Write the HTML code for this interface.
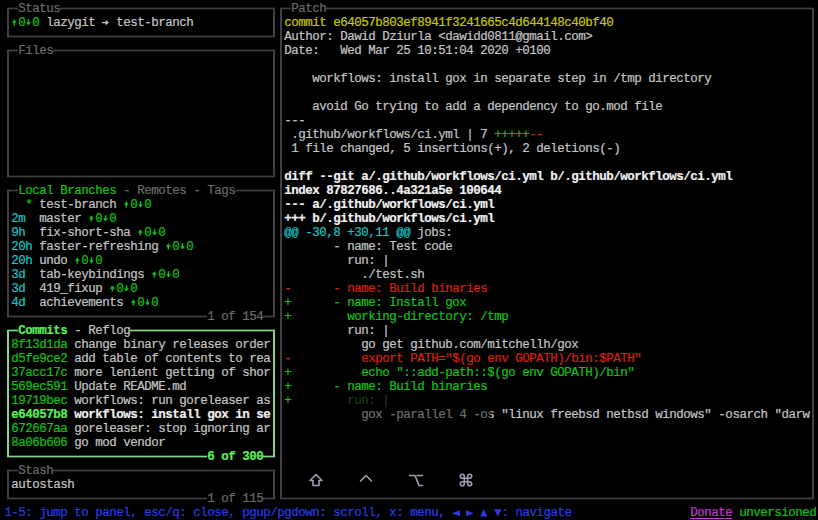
<!DOCTYPE html>
<html><head><meta charset="utf-8"><style>
html,body{margin:0;padding:0;background:#000;width:818px;height:520px;overflow:hidden;}
body{position:relative;font-family:"Liberation Mono",monospace;font-size:12.5px;letter-spacing:-0.500px;}
.t{position:absolute;white-space:pre;line-height:14.0px;height:14.0px;-webkit-text-stroke:0.2px currentColor;}
.ln{position:absolute;}
.bk{position:absolute;background:#000;}
.ov{position:absolute;left:296px;top:393px;width:195px;height:103px;background:rgba(0,0,0,0.45);}
</style></head><body>
<div class="ln" style="left:7px;top:8px;width:268px;height:1px;background:#404040;box-shadow:0 -1px 0 #161616,0 1px 0 #161616;"></div><div class="ln" style="left:7px;top:36px;width:268px;height:1px;background:#404040;box-shadow:0 -1px 0 #161616,0 1px 0 #161616;"></div><div class="ln" style="left:7px;top:8px;width:2px;height:29px;background:#404040;"></div><div class="ln" style="left:273px;top:8px;width:2px;height:29px;background:#404040;"></div><div class="bk" style="left:18.30px;top:1.00px;width:42.00px;height:14.0px"></div><div class="t" style="left:18.30px;top:2.00px;color:#6c6c6c;">Status</div><div class="t" style="left:11.30px;top:16.00px;color:#14c014;"> 0 0</div><div class="t" style="left:39.30px;top:16.00px;color:#c6c6c6;"> lazygit   test-branch</div><div class="ln" style="left:7px;top:50px;width:268px;height:1px;background:#404040;box-shadow:0 -1px 0 #161616,0 1px 0 #161616;"></div><div class="ln" style="left:7px;top:176px;width:268px;height:1px;background:#404040;box-shadow:0 -1px 0 #161616,0 1px 0 #161616;"></div><div class="ln" style="left:7px;top:50px;width:2px;height:127px;background:#404040;"></div><div class="ln" style="left:273px;top:50px;width:2px;height:127px;background:#404040;"></div><div class="bk" style="left:18.30px;top:43.00px;width:35.00px;height:14.0px"></div><div class="t" style="left:18.30px;top:44.00px;color:#6c6c6c;">Files</div><div class="ln" style="left:7px;top:190px;width:268px;height:1px;background:#404040;box-shadow:0 -1px 0 #161616,0 1px 0 #161616;"></div><div class="ln" style="left:7px;top:316px;width:268px;height:1px;background:#404040;box-shadow:0 -1px 0 #161616,0 1px 0 #161616;"></div><div class="ln" style="left:7px;top:190px;width:2px;height:127px;background:#404040;"></div><div class="ln" style="left:273px;top:190px;width:2px;height:127px;background:#404040;"></div><div class="bk" style="left:18.30px;top:183.00px;width:217.00px;height:14.0px"></div><div class="t" style="left:18.30px;top:184.00px;color:#14c014;">Local Branches</div><div class="t" style="left:116.30px;top:184.00px;color:#6c6c6c;"> - Remotes - Tags</div><div class="bk" style="left:207.30px;top:309.00px;width:56.00px;height:14.0px"></div><div class="t" style="left:207.30px;top:310.00px;color:#6c6c6c;">1 of 154</div><div class="t" style="left:11.30px;top:198.00px;color:#14c014;">  * </div><div class="t" style="left:39.30px;top:198.00px;color:#c6c6c6;">test-branch </div><div class="t" style="left:123.30px;top:198.00px;color:#14c014;"> 0 0</div><div class="t" style="left:11.30px;top:212.00px;color:#18c4c4;">2m  </div><div class="t" style="left:39.30px;top:212.00px;color:#c6c6c6;">master </div><div class="t" style="left:88.30px;top:212.00px;color:#14c014;"> 0 0</div><div class="t" style="left:11.30px;top:226.00px;color:#18c4c4;">9h  </div><div class="t" style="left:39.30px;top:226.00px;color:#c6c6c6;">fix-short-sha </div><div class="t" style="left:137.30px;top:226.00px;color:#14c014;"> 0 0</div><div class="t" style="left:11.30px;top:240.00px;color:#18c4c4;">20h </div><div class="t" style="left:39.30px;top:240.00px;color:#c6c6c6;">faster-refreshing </div><div class="t" style="left:165.30px;top:240.00px;color:#14c014;"> 0 0</div><div class="t" style="left:11.30px;top:254.00px;color:#18c4c4;">20h </div><div class="t" style="left:39.30px;top:254.00px;color:#c6c6c6;">undo </div><div class="t" style="left:74.30px;top:254.00px;color:#14c014;"> 0 0</div><div class="t" style="left:11.30px;top:268.00px;color:#18c4c4;">3d  </div><div class="t" style="left:39.30px;top:268.00px;color:#c6c6c6;">tab-keybindings </div><div class="t" style="left:151.30px;top:268.00px;color:#14c014;"> 0 0</div><div class="t" style="left:11.30px;top:282.00px;color:#18c4c4;">3d  </div><div class="t" style="left:39.30px;top:282.00px;color:#c6c6c6;">419_fixup </div><div class="t" style="left:109.30px;top:282.00px;color:#14c014;"> 0 0</div><div class="t" style="left:11.30px;top:296.00px;color:#18c4c4;">4d  </div><div class="t" style="left:39.30px;top:296.00px;color:#c6c6c6;">achievements </div><div class="t" style="left:130.30px;top:296.00px;color:#14c014;"> 0 0</div><div class="ln" style="left:7px;top:330px;width:268px;height:1px;background:#86d68a;box-shadow:0 -1px 0 #2a4a2a,0 1px 0 #2a4a2a;"></div><div class="ln" style="left:7px;top:456px;width:268px;height:1px;background:#86d68a;box-shadow:0 -1px 0 #2a4a2a,0 1px 0 #2a4a2a;"></div><div class="ln" style="left:7px;top:330px;width:2px;height:127px;background:#86d68a;"></div><div class="ln" style="left:273px;top:330px;width:2px;height:127px;background:#86d68a;"></div><div class="bk" style="left:18.30px;top:323.00px;width:112.00px;height:14.0px"></div><div class="t" style="left:18.30px;top:324.00px;color:#5af05a;font-weight:bold;">Commits</div><div class="t" style="left:67.30px;top:324.00px;color:#c6c6c6;"> - Reflog</div><div class="bk" style="left:207.30px;top:449.00px;width:56.00px;height:14.0px"></div><div class="t" style="left:207.30px;top:450.00px;color:#5af05a;font-weight:bold;">6 of 300</div><div class="t" style="left:11.30px;top:338.00px;color:#14c014;">8f13d1da</div><div class="t" style="left:67.30px;top:338.00px;color:#c6c6c6;"> change binary releases order</div><div class="t" style="left:11.30px;top:352.00px;color:#14c014;">d5fe9ce2</div><div class="t" style="left:67.30px;top:352.00px;color:#c6c6c6;"> add table of contents to rea</div><div class="t" style="left:11.30px;top:366.00px;color:#14c014;">37acc17c</div><div class="t" style="left:67.30px;top:366.00px;color:#c6c6c6;"> more lenient getting of shor</div><div class="t" style="left:11.30px;top:380.00px;color:#14c014;">569ec591</div><div class="t" style="left:67.30px;top:380.00px;color:#c6c6c6;"> Update README.md</div><div class="t" style="left:11.30px;top:394.00px;color:#14c014;">19719bec</div><div class="t" style="left:67.30px;top:394.00px;color:#c6c6c6;"> workflows: run goreleaser as</div><div class="t" style="left:11.30px;top:408.00px;color:#5af05a;font-weight:bold;">e64057b8</div><div class="t" style="left:67.30px;top:408.00px;color:#f2f2f2;font-weight:bold;"> workflows: install gox in se</div><div class="t" style="left:11.30px;top:422.00px;color:#14c014;">672667aa</div><div class="t" style="left:67.30px;top:422.00px;color:#c6c6c6;"> goreleaser: stop ignoring ar</div><div class="t" style="left:11.30px;top:436.00px;color:#14c014;">8a06b606</div><div class="t" style="left:67.30px;top:436.00px;color:#c6c6c6;"> go mod vendor</div><div class="ln" style="left:7px;top:470px;width:268px;height:1px;background:#404040;box-shadow:0 -1px 0 #161616,0 1px 0 #161616;"></div><div class="ln" style="left:7px;top:498px;width:268px;height:1px;background:#404040;box-shadow:0 -1px 0 #161616,0 1px 0 #161616;"></div><div class="ln" style="left:7px;top:470px;width:2px;height:29px;background:#404040;"></div><div class="ln" style="left:273px;top:470px;width:2px;height:29px;background:#404040;"></div><div class="bk" style="left:18.30px;top:463.00px;width:35.00px;height:14.0px"></div><div class="t" style="left:18.30px;top:464.00px;color:#6c6c6c;">Stash</div><div class="bk" style="left:207.30px;top:491.00px;width:56.00px;height:14.0px"></div><div class="t" style="left:207.30px;top:492.00px;color:#6c6c6c;">1 of 115</div><div class="t" style="left:11.30px;top:478.00px;color:#c6c6c6;">autostash</div><div class="ln" style="left:280px;top:8px;width:534px;height:1px;background:#404040;box-shadow:0 -1px 0 #161616,0 1px 0 #161616;"></div><div class="ln" style="left:280px;top:498px;width:534px;height:1px;background:#404040;box-shadow:0 -1px 0 #161616,0 1px 0 #161616;"></div><div class="ln" style="left:280px;top:8px;width:2px;height:491px;background:#404040;"></div><div class="ln" style="left:812px;top:8px;width:2px;height:491px;background:#404040;"></div><div class="bk" style="left:291.30px;top:1.00px;width:35.00px;height:14.0px"></div><div class="t" style="left:291.30px;top:2.00px;color:#6c6c6c;">Patch</div><div class="t" style="left:284.30px;top:16.00px;color:#c8c800;">commit e64057b803ef8941f3241665c4d644148c40bf40</div><div class="t" style="left:284.30px;top:30.00px;color:#c6c6c6;">Author: Dawid Dziurla &lt;dawidd0811@gmail.com&gt;</div><div class="t" style="left:284.30px;top:44.00px;color:#c6c6c6;">Date:   Wed Mar 25 10:51:04 2020 +0100</div><div class="t" style="left:284.30px;top:72.00px;color:#c6c6c6;">    workflows: install gox in separate step in /tmp directory</div><div class="t" style="left:284.30px;top:100.00px;color:#c6c6c6;">    avoid Go trying to add a dependency to go.mod file</div><div class="t" style="left:284.30px;top:114.00px;color:#c6c6c6;">---</div><div class="t" style="left:284.30px;top:128.00px;color:#c6c6c6;"> .github/workflows/ci.yml | 7 </div><div class="t" style="left:494.30px;top:128.00px;color:#14c014;">+++++</div><div class="t" style="left:529.30px;top:128.00px;color:#d8220c;">--</div><div class="t" style="left:284.30px;top:142.00px;color:#c6c6c6;"> 1 file changed, 5 insertions(+), 2 deletions(-)</div><div class="t" style="left:284.30px;top:170.00px;color:#f2f2f2;font-weight:bold;">diff --git a/.github/workflows/ci.yml b/.github/workflows/ci.yml</div><div class="t" style="left:284.30px;top:184.00px;color:#f2f2f2;font-weight:bold;">index 87827686..4a321a5e 100644</div><div class="t" style="left:284.30px;top:198.00px;color:#f2f2f2;font-weight:bold;">--- a/.github/workflows/ci.yml</div><div class="t" style="left:284.30px;top:212.00px;color:#f2f2f2;font-weight:bold;">+++ b/.github/workflows/ci.yml</div><div class="t" style="left:284.30px;top:226.00px;color:#18c4c4;">@@ -30,8 +30,11 @@</div><div class="t" style="left:410.30px;top:226.00px;color:#c6c6c6;"> jobs:</div><div class="t" style="left:284.30px;top:240.00px;color:#c6c6c6;">       - name: Test code</div><div class="t" style="left:284.30px;top:254.00px;color:#c6c6c6;">         run: |</div><div class="t" style="left:284.30px;top:268.00px;color:#c6c6c6;">           ./test.sh</div><div class="t" style="left:284.30px;top:282.00px;color:#d8220c;">-      - name: Build binaries</div><div class="t" style="left:284.30px;top:296.00px;color:#14c014;">+      - name: Install gox</div><div class="t" style="left:284.30px;top:310.00px;color:#14c014;">+        working-directory: /tmp</div><div class="t" style="left:284.30px;top:324.00px;color:#c6c6c6;">         run: |</div><div class="t" style="left:284.30px;top:338.00px;color:#c6c6c6;">           go get github.com/mitchellh/gox</div><div class="t" style="left:284.30px;top:352.00px;color:#d8220c;">-          export PATH=&quot;$(go env GOPATH)/bin:$PATH&quot;</div><div class="t" style="left:284.30px;top:366.00px;color:#14c014;">+          echo &quot;::add-path::$(go env GOPATH)/bin&quot;</div><div class="t" style="left:284.30px;top:380.00px;color:#14c014;">+      - name: Build binaries</div><div class="t" style="left:284.30px;top:394.00px;color:#14c014;">+</div><div class="t" style="left:291.30px;top:394.00px;color:#2f6a2f;">        run: |</div><div class="t" style="left:284.30px;top:408.00px;color:#c6c6c6;">           gox -parallel 4 -os &quot;linux freebsd netbsd windows&quot; -osarch &quot;darw</div><div class="t" style="left:4.30px;top:506.00px;color:#283ce6;">1-5: jump to panel, esc/q: close, pgup/pgdown: scroll, x: menu,        : navigate</div><div class="t" style="left:690.30px;top:506.00px;color:#c832d2;">Donate</div><div class="ln" style="left:690.30px;top:518px;width:42.0px;height:1px;background:#c832d2"></div><div class="t" style="left:739.30px;top:506.00px;color:#14c014;">unversioned</div>
<svg width="818" height="520" style="position:absolute;left:0;top:0"><path fill="#14c014" d="M14.30 19.30 L16.70 22.70 L15.05 22.70 L15.05 25.60 L13.55 25.60 L13.55 22.70 L11.90 22.70 Z"/><path fill="#14c014" d="M28.50 25.60 L30.90 22.20 L29.25 22.20 L29.25 19.30 L27.75 19.30 L27.75 22.20 L26.10 22.20 Z"/><path fill="none" stroke="#c6c6c6" stroke-width="1.4" d="M101.90 22.60 H107.70 M105.70 20.70 L107.80 22.60 L105.70 24.50"/><path fill="#14c014" d="M126.30 201.30 L128.70 204.70 L127.05 204.70 L127.05 207.60 L125.55 207.60 L125.55 204.70 L123.90 204.70 Z"/><path fill="#14c014" d="M140.50 207.60 L142.90 204.20 L141.25 204.20 L141.25 201.30 L139.75 201.30 L139.75 204.20 L138.10 204.20 Z"/><path fill="#14c014" d="M91.30 215.30 L93.70 218.70 L92.05 218.70 L92.05 221.60 L90.55 221.60 L90.55 218.70 L88.90 218.70 Z"/><path fill="#14c014" d="M105.50 221.60 L107.90 218.20 L106.25 218.20 L106.25 215.30 L104.75 215.30 L104.75 218.20 L103.10 218.20 Z"/><path fill="#14c014" d="M140.30 229.30 L142.70 232.70 L141.05 232.70 L141.05 235.60 L139.55 235.60 L139.55 232.70 L137.90 232.70 Z"/><path fill="#14c014" d="M154.50 235.60 L156.90 232.20 L155.25 232.20 L155.25 229.30 L153.75 229.30 L153.75 232.20 L152.10 232.20 Z"/><path fill="#14c014" d="M168.30 243.30 L170.70 246.70 L169.05 246.70 L169.05 249.60 L167.55 249.60 L167.55 246.70 L165.90 246.70 Z"/><path fill="#14c014" d="M182.50 249.60 L184.90 246.20 L183.25 246.20 L183.25 243.30 L181.75 243.30 L181.75 246.20 L180.10 246.20 Z"/><path fill="#14c014" d="M77.30 257.30 L79.70 260.70 L78.05 260.70 L78.05 263.60 L76.55 263.60 L76.55 260.70 L74.90 260.70 Z"/><path fill="#14c014" d="M91.50 263.60 L93.90 260.20 L92.25 260.20 L92.25 257.30 L90.75 257.30 L90.75 260.20 L89.10 260.20 Z"/><path fill="#14c014" d="M154.30 271.30 L156.70 274.70 L155.05 274.70 L155.05 277.60 L153.55 277.60 L153.55 274.70 L151.90 274.70 Z"/><path fill="#14c014" d="M168.50 277.60 L170.90 274.20 L169.25 274.20 L169.25 271.30 L167.75 271.30 L167.75 274.20 L166.10 274.20 Z"/><path fill="#14c014" d="M112.30 285.30 L114.70 288.70 L113.05 288.70 L113.05 291.60 L111.55 291.60 L111.55 288.70 L109.90 288.70 Z"/><path fill="#14c014" d="M126.50 291.60 L128.90 288.20 L127.25 288.20 L127.25 285.30 L125.75 285.30 L125.75 288.20 L124.10 288.20 Z"/><path fill="#14c014" d="M133.30 299.30 L135.70 302.70 L134.05 302.70 L134.05 305.60 L132.55 305.60 L132.55 302.70 L130.90 302.70 Z"/><path fill="#14c014" d="M147.50 305.60 L149.90 302.20 L148.25 302.20 L148.25 299.30 L146.75 299.30 L146.75 302.20 L145.10 302.20 Z"/><path fill="#283ce6" d="M452.00 513.30 L459.90 510.30 L459.90 516.30 Z"/><path fill="#283ce6" d="M473.70 513.30 L466.10 510.30 L466.10 516.30 Z"/><path fill="#283ce6" d="M483.80 509.00 L487.30 516.50 L480.10 516.50 Z"/><path fill="#283ce6" d="M497.80 516.50 L501.50 509.30 L494.10 509.30 Z"/></svg>
<div class="ov"></div>
<svg class="ic" width="818" height="520" viewBox="0 0 818 520" style="position:absolute;left:0;top:0">
<g fill="none" stroke="#9aa1b2" stroke-width="1.6" stroke-linejoin="round" stroke-linecap="round">
<path d="M316 474.5 L322 480.5 L319 480.5 L319 485.5 L313 485.5 L313 480.5 L310 480.5 Z"/>
<path d="M360.5 481 L366 475.5 L371.5 481"/>
<path d="M409.5 475.5 L415 475.5 L419 485.5 L422.5 485.5 M417 475.5 L422.5 475.5"/>
<path d="M462.3 478.3 H469.7 M462.3 481.7 H469.7 M464.3 476.3 V483.7 M467.7 476.3 V483.7 M462.3 478.3 A2.0 2.0 0 1 1 464.3 476.3 M467.7 476.3 A2.0 2.0 0 1 1 469.7 478.3 M469.7 481.7 A2.0 2.0 0 1 1 467.7 483.7 M464.3 483.7 A2.0 2.0 0 1 1 462.3 481.7"/>
</g></svg>
</body></html>
